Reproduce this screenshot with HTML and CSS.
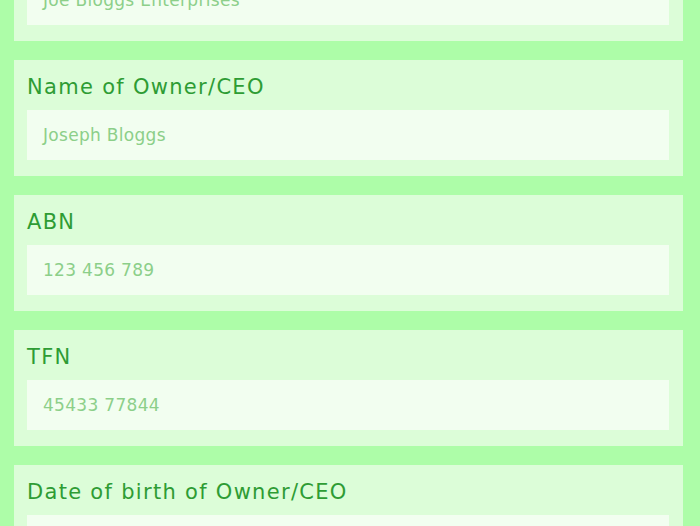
FILE: index.html
```html
<!DOCTYPE html>
<html>
<head>
<meta charset="utf-8">
<link rel="stylesheet" href="styles.css">
</head>
<body>
<div class="form">
  <div class="card">
    <div class="label">Business Name</div>
    <div class="input">Joe Bloggs Enterprises</div>
  </div>
  <div class="card">
    <div class="label">Name of Owner/CEO</div>
    <div class="input">Joseph Bloggs</div>
  </div>
  <div class="card">
    <div class="label">ABN</div>
    <div class="input">123 456 789</div>
  </div>
  <div class="card">
    <div class="label">TFN</div>
    <div class="input">45433 77844</div>
  </div>
  <div class="card">
    <div class="label">Date of birth of Owner/CEO</div>
    <div class="input">01/01/1970</div>
  </div>
</div>
</body>
</html>
```
FILE: styles.css
```css
html, body {
  margin: 0;
  padding: 0;
  background: #adfda8;
  height: 100%;
  overflow: hidden;
}
.form {
  display: flex;
  flex-direction: column;
  gap: 19px;
  margin: -75px 17px 0 14px;
  font-family: "DejaVu Sans", sans-serif;
}
.card {
  background: #dcfdd8;
  padding: 0 14px 16px 13px;
  height: 116px;
  box-sizing: border-box;
  display: flex;
  flex-direction: column;
}
.label {
  height: 50px;
  box-sizing: border-box;
  padding-top: 15px;
  font-size: 21px;
  line-height: 24px;
  letter-spacing: 1.3px;
  color: #2e9c34;
}
.input {
  height: 50px;
  box-sizing: border-box;
  background: #f2fef0;
  padding-left: 16px;
  display: flex;
  align-items: center;
  font-size: 17px;
  letter-spacing: 0.3px;
  color: #8ccf89;
}
```
